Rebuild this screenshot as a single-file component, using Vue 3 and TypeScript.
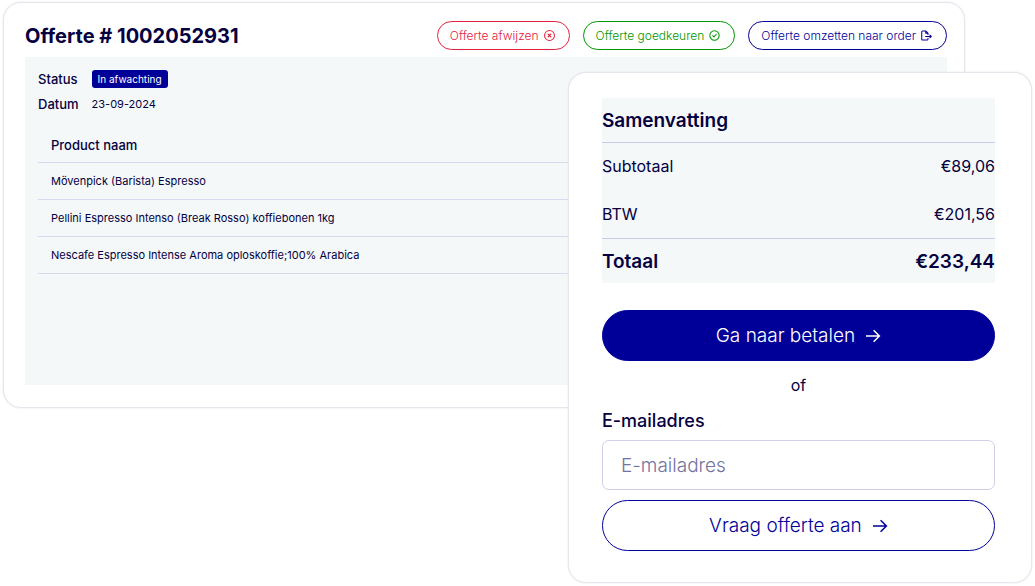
<script setup lang="ts">
import { ref } from 'vue'

interface SummaryLine {
  label: string
  amount: string
}

const products: string[] = [
  'Mövenpick (Barista) Espresso',
  'Pellini Espresso Intenso (Break Rosso) koffiebonen 1kg',
  'Nescafe Espresso Intense Aroma oploskoffie;100% Arabica',
]

const lines: SummaryLine[] = [
  { label: 'Subtotaal', amount: '€89,06' },
  { label: 'BTW', amount: '€201,56' },
]

const email = ref('')
</script>

<template>
  <main class="stage">
    <section class="card quote">
      <header class="quote-head">
        <h1>Offerte # 1002052931</h1>
        <div class="actions">
          <button type="button" class="pill reject">
            Offerte afwijzen
            <svg class="icon" viewBox="0 0 12 12" aria-hidden="true">
              <circle cx="6" cy="6" r="5.4" />
              <path class="cross" d="M4.6 4.6l2.8 2.8M7.4 4.6L4.6 7.4" />
            </svg>
          </button>
          <button type="button" class="pill approve">
            Offerte goedkeuren
            <svg class="icon" viewBox="0 0 12 12" aria-hidden="true">
              <circle cx="6" cy="6" r="5.1" />
              <path d="M4 6.2l1.4 1.3 2.6-2.9" />
            </svg>
          </button>
          <button type="button" class="pill convert">
            Offerte omzetten naar order
            <svg class="icon" viewBox="0 0 12 12" aria-hidden="true">
              <path d="M7.6 9v1.2a.8.8 0 0 1-.8.8H1.6a.8.8 0 0 1-.8-.8V2a.8.8 0 0 1 .8-.8h3.8l2.2 2.2v1.4M5.2 1.4v2.2h2.2" />
              <path d="M5 7h6.2M9.7 5.5L11.2 7 9.7 8.5" />
            </svg>
          </button>
        </div>
      </header>

      <div class="panel">
        <dl class="meta">
          <dt>Status</dt>
          <dd><span class="badge">In afwachting</span></dd>
          <dt>Datum</dt>
          <dd>23-09-2024</dd>
        </dl>
        <table class="products">
          <thead>
            <tr><th scope="col">Product naam</th></tr>
          </thead>
          <tbody>
            <tr v-for="product in products" :key="product">
              <td>{{ product }}</td>
            </tr>
          </tbody>
        </table>
      </div>
    </section>

    <aside class="card summary">
      <table class="totals">
        <thead>
          <tr><th colspan="2" scope="colgroup">Samenvatting</th></tr>
        </thead>
        <tbody>
          <tr v-for="line in lines" :key="line.label">
            <th scope="row">{{ line.label }}</th>
            <td>{{ line.amount }}</td>
          </tr>
        </tbody>
        <tfoot>
          <tr>
            <th scope="row">Totaal</th>
            <td>€233,44</td>
          </tr>
        </tfoot>
      </table>

      <button type="button" class="cta primary">
        Ga naar betalen
        <svg class="arrow" viewBox="0 0 16 16" aria-hidden="true">
          <path d="M1 8h13.4M8.6 2.2L14.4 8l-5.8 5.8" />
        </svg>
      </button>
      <p class="or">of</p>
      <form class="request" @submit.prevent>
        <label for="email">E-mailadres</label>
        <input id="email" v-model="email" type="email" placeholder="E-mailadres" />
        <button type="submit" class="cta outline">
          Vraag offerte aan
          <svg class="arrow" viewBox="0 0 16 16" aria-hidden="true">
            <path d="M1 8h13.4M8.6 2.2L14.4 8l-5.8 5.8" />
          </svg>
        </button>
      </form>
    </aside>
  </main>
</template>

<style>
body {
  margin: 0;
  background: #fff;
}
</style>

<style scoped>
.stage {
  display: grid;
  grid-template-columns: minmax(0, 1fr);
  align-items: start;
  padding: 2px 3px;
  color: #05003f;
  font-family: Inter, "Liberation Sans", sans-serif;
}

.stage *,
.stage {
  box-sizing: border-box;
}

button,
input {
  font-family: inherit;
}

.card {
  grid-area: 1 / 1;
  background: #fff;
  border: 1px solid #e6e6ec;
  border-radius: 18px;
  box-shadow: 0 0 2px #e4e4ec;
}

.quote {
  margin-right: 67px;
  padding: 18px 17px 22px 21px;
}

.quote-head {
  display: flex;
  align-items: center;
  justify-content: space-between;
  margin-bottom: 7px;
}

h1 {
  margin: 0;
  font-size: 20px;
  line-height: 24px;
  font-weight: 700;
}

.actions {
  display: flex;
  gap: 13px;
}

.pill {
  display: flex;
  align-items: center;
  gap: 5px;
  height: 29px;
  padding: 0 14px 0 12px;
  border: 1px solid currentColor;
  border-radius: 15px;
  background: #fff;
  font-size: 12px;
  font-weight: 300;
  white-space: nowrap;
}

.reject {
  color: #e5203f;
}

.approve {
  color: #009600;
}

.convert {
  color: #000099;
}

.icon {
  width: 11px;
  height: 11px;
  fill: none;
  stroke: currentColor;
  stroke-width: 1.1;
  stroke-linecap: round;
  stroke-linejoin: round;
}

.cross {
  stroke-width: 1.4;
}

.panel {
  min-height: 328px;
  padding: 13px;
  background: #f4f8f9;
}

.meta {
  display: grid;
  grid-template-columns: max-content 1fr;
  column-gap: 13px;
  row-gap: 7px;
  margin: 0 0 15px;
  line-height: 18px;
  font-size: 11px;
}

.meta dt {
  font-size: 13px;
  font-weight: 500;
}

.meta dd {
  display: flex;
  align-items: center;
  margin: 0;
}

.badge {
  padding: 0 6px;
  border-radius: 3px;
  background: #000099;
  color: #fff;
  font-size: 10px;
}

.products {
  width: 100%;
  border-collapse: collapse;
  font-size: 11px;
}

.products th,
.products td {
  height: 37px;
  padding: 0 13px;
  border-bottom: 1px solid #d8d9ee;
  text-align: left;
  font-weight: 400;
}

.products th {
  height: 34px;
  font-size: 13px;
  font-weight: 500;
}

.summary {
  justify-self: end;
  width: 45.1%;
  margin-top: 70px;
  padding: 25px 36px 31px 33px;
}

.totals {
  width: 100%;
  border-collapse: collapse;
  background: #f4f8f9;
  font-size: 16px;
}

.totals th,
.totals td {
  height: 48px;
  padding: 0;
  text-align: left;
  font-weight: 400;
}

.totals td {
  text-align: right;
}

.totals thead th,
.totals tfoot th,
.totals tfoot td {
  height: 44px;
  padding-top: 2px;
  font-size: 19px;
  font-weight: 600;
}

.totals tfoot th,
.totals tfoot td {
  height: 45px;
}

.totals thead tr {
  border-bottom: 1px solid #cbccec;
}

.totals tfoot tr {
  border-top: 1px solid #cbccec;
}

.cta {
  display: flex;
  align-items: center;
  justify-content: center;
  gap: 10px;
  width: 100%;
  height: 51px;
  border: 1px solid #000099;
  border-radius: 26px;
  font-size: 19px;
  font-weight: 300;
}

.primary {
  margin-top: 27px;
  background: #000099;
  color: #fff;
}

.outline {
  background: #fff;
  color: #000099;
}

.arrow {
  width: 16px;
  height: 16px;
  fill: none;
  stroke: currentColor;
  stroke-width: 1.5;
}

.or {
  margin: 12px 0;
  text-align: center;
  font-size: 16px;
  line-height: 24px;
}

.request label {
  display: block;
  margin-bottom: 7px;
  font-size: 18px;
  line-height: 24px;
  font-weight: 500;
}

.request input {
  display: block;
  width: 100%;
  height: 50px;
  margin-bottom: 10px;
  padding: 0 18px;
  border: 1px solid #cfcfe8;
  border-radius: 7px;
  background: #fff;
  color: #05003f;
  font-size: 19px;
  font-weight: 300;
}

.request input::placeholder {
  color: #7472a0;
  opacity: 1;
}
</style>
